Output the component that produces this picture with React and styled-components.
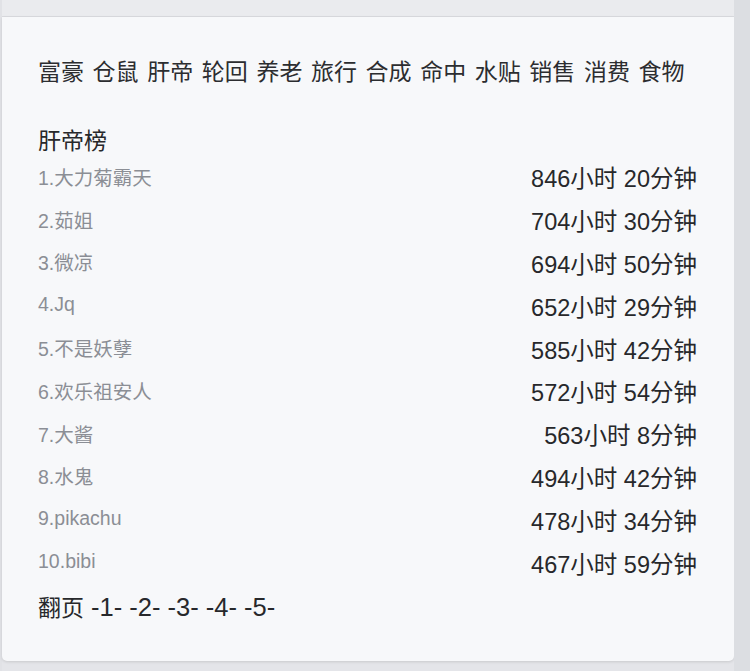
import React from 'react';
import styled, { createGlobalStyle } from 'styled-components';

const GlobalStyle = createGlobalStyle`
  html, body {
    margin: 0;
    padding: 0;
    background: #e4e5e9;
  }
  body {
    font-family: "Liberation Sans", "Noto Sans CJK SC", sans-serif;
    -webkit-font-smoothing: antialiased;
  }
`;

const tags = ['富豪', '仓鼠', '肝帝', '轮回', '养老', '旅行', '合成', '命中', '水贴', '销售', '消费', '食物'];

const ranking = [
  { name: '大力菊霸天', time: '846小时 20分钟' },
  { name: '茹姐', time: '704小时 30分钟' },
  { name: '微凉', time: '694小时 50分钟' },
  { name: 'Jq', time: '652小时 29分钟' },
  { name: '不是妖孽', time: '585小时 42分钟' },
  { name: '欢乐祖安人', time: '572小时 54分钟' },
  { name: '大酱', time: '563小时 8分钟' },
  { name: '水鬼', time: '494小时 42分钟' },
  { name: 'pikachu', time: '478小时 34分钟' },
  { name: 'bibi', time: '467小时 59分钟' },
];

const Page = styled.div`
  display: flex;
  min-height: 671px;
  background: #e4e5e9;
`;

const LeftEdge = styled.div`
  width: 2px;
  background: #e1e2e6;
`;

const Column = styled.div`
  width: 732px;
  display: flex;
  flex-direction: column;
`;

const Scrollbar = styled.div`
  flex: 1;
  background: #dcdee2;
`;

const PrevCard = styled.div`
  height: 16px;
  background: #eaebee;
  border-bottom: 1px solid #dadbdf;
`;

const Card = styled.div`
  background: #f7f8fa;
  border-radius: 0 0 5px 5px;
  box-shadow: 0 1px 3px rgba(0, 0, 0, 0.12);
  padding: 37px 36px 37px 36px;
  display: flex;
  flex-direction: column;
`;

const Tags = styled.div`
  display: flex;
  gap: 8.6px;
  height: 32px;
  align-items: center;
  font-size: 23px;
  color: #2c2d30;
  margin-bottom: 40px;
`;

const Title = styled.div`
  font-size: 23px;
  line-height: 30px;
  color: #27282b;
`;

const Row = styled.div`
  display: flex;
  justify-content: space-between;
  align-items: center;
  height: 42.8px;
  padding-right: 1px;
`;

const Name = styled.span`
  font-size: 19.5px;
  color: #8b8e95;
  margin-top: -2px;
`;

const Time = styled.span`
  font-size: 23.5px;
  color: #27282b;
`;

const Pager = styled.div`
  margin-top: 7px;
  font-size: 23px;
  line-height: 32px;
  color: #27282b;
`;

const PageLinks = styled.span`
  font-size: 25.5px;
`;

export default function App() {
  return (
    <>
      <GlobalStyle />
      <Page>
        <LeftEdge />
        <Column>
          <PrevCard />
          <Card>
            <Tags>
              {tags.map(t => <span key={t}>{t}</span>)}
            </Tags>
            <Title>肝帝榜</Title>
            {ranking.map((r, i) => (
              <Row key={r.name}>
                <Name>{i + 1}.{r.name}</Name>
                <Time>{r.time}</Time>
              </Row>
            ))}
            <Pager>翻页<PageLinks> -1- -2- -3- -4- -5-</PageLinks></Pager>
          </Card>
        </Column>
        <Scrollbar />
      </Page>
    </>
  );
}
